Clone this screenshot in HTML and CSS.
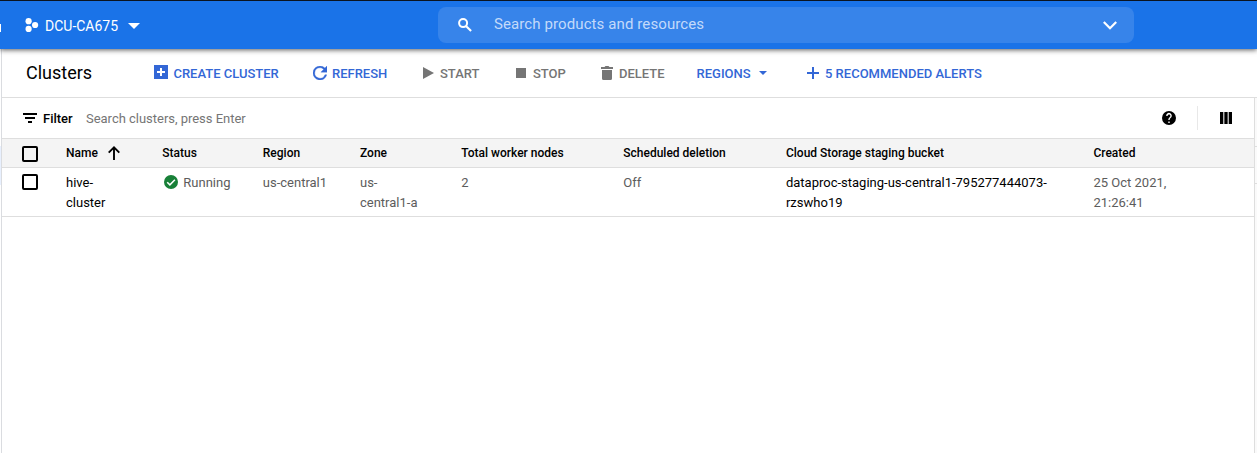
FILE: index.html
```html
<!DOCTYPE html>
<html lang="en">
<head>
<meta charset="utf-8">
<title>Clusters</title>
<link rel="stylesheet" href="styles.css">
</head>
<body>
<header class="topbar">
  <span class="brand-edge"></span>
  <div class="project">
    <svg class="project-icon" width="14" height="14" viewBox="0 0 14 14"><g fill="#fff"><circle cx="3.6" cy="3.2" r="3.1"/><circle cx="3.6" cy="10.900" r="3.1"/><circle cx="10.1" cy="7" r="3.1"/></g></svg>
    <span class="project-name">DCU-CA675</span>
    <svg width="12" height="6" viewBox="0 0 12 6"><path fill="#fff" d="M0 0h12L6 6z"/></svg>
  </div>
  <div class="search">
    <svg class="search-icon" width="14" height="14" viewBox="0 0 14 14" fill="none" stroke="#fff"><circle cx="5.1" cy="5.1" r="4" stroke-width="2"/><path d="M8.2 8.2l4.9 4.9" stroke-width="2.1"/></svg>
    <span class="search-text">Search products and resources</span>
    <svg class="search-chevron" width="14" height="9" viewBox="0 0 14 9" fill="none" stroke="#fff" stroke-width="2.2"><path d="M.8 1L7 7.2 13.2 1"/></svg>
  </div>
</header>
<div class="page">
  <aside class="edge-left"><span class="edge-active"></span></aside>
  <main class="main">
    <div class="toolbar">
      <h1 class="title">Clusters</h1>
      <div class="action create">
        <svg width="14" height="14" viewBox="0 0 14 14"><path fill="#3367d6" d="M0 0h14v14H0z"/><path fill="#fff" d="M6 3h2v3h3v2H8v3H6V8H3V6h3z"/></svg><span>CREATE CLUSTER</span>
      </div>
      <div class="action refresh">
        <svg width="14" height="14" viewBox="4 4 16 16"><path fill="#3367d6" stroke="#3367d6" stroke-width=".4" d="M17.65 6.35A7.95 7.95 0 0 0 12 4a8 8 0 1 0 7.73 10h-2.08A6 6 0 1 1 12 6c1.66 0 3.14.69 4.22 1.78L13 11h7V4z"/></svg><span>REFRESH</span>
      </div>
      <div class="action off start">
        <svg width="11" height="12" viewBox="0 0 11 12"><path fill="#757575" d="M0 0l11 6-11 6z"/></svg><span>START</span>
      </div>
      <div class="action off stop">
        <svg width="10" height="10" viewBox="0 0 10 10"><path fill="#757575" d="M0 0h10v10H0z"/></svg><span>STOP</span>
      </div>
      <div class="action off delete">
        <svg width="12" height="14" viewBox="0 0 12 14"><path fill="#757575" d="M0 1h3.500L4.500 0h3l1 1H12v2H0zM1 4h10v8.500a1.500 1.500 0 0 1-1.500 1.500h-7A1.500 1.500 0 0 1 1 12.500z"/></svg><span>DELETE</span>
      </div>
      <div class="action regions">
        <span>REGIONS</span><svg width="8" height="4" viewBox="0 0 8 4"><path fill="#3367d6" d="M0 0h8L4 4z"/></svg>
      </div>
      <div class="action alerts">
        <svg width="12" height="12" viewBox="0 0 12 12"><path fill="#3367d6" d="M5 0h2v5h5v2H7v5H5V7H0V5h5z"/></svg><span>5 RECOMMENDED ALERTS</span>
      </div>
    </div>
    <section class="panel">
      <div class="filter">
        <svg width="14" height="10" viewBox="0 0 14 10"><path fill="#000" d="M0 0h14v2H0zM2 4h10v2H2zM5 8h4v2H5z"/></svg>
        <span class="filter-label">Filter</span>
        <span class="filter-hint">Search clusters, press Enter</span>
        <svg class="help" width="14" height="14" viewBox="2 2 20 20"><path d="M12 2a10 10 0 1 0 0 20 10 10 0 0 0 0-20zm1 17h-2v-2h2zm2.070-7.750l-.9.920C13.450 12.900 13 13.500 13 15h-2v-.5c0-1.100.450-2.100 1.170-2.830l1.240-1.260A2 2 0 1 0 10 9H8a4 4 0 1 1 7.070 2.250z"/></svg>
        <span class="rule"></span>
        <svg class="columns" width="12" height="12" viewBox="0 0 12 12"><path d="M0 0h3.300v12H0zM4.350 0h3.300v12h-3.300zM8.700 0H12v12H8.700z"/></svg>
      </div>
      <div class="row head">
        <span class="box"></span>
        <div class="name-head">Name <svg width="12" height="14" viewBox="0 0 12 14" fill="none" stroke="#000" stroke-width="1.900"><path d="M6 14V1.500M.7 6.700L6 1.400l5.300 5.300"/></svg></div>
        <div>Status</div>
        <div>Region</div>
        <div>Zone</div>
        <div>Total worker nodes</div>
        <div>Scheduled deletion</div>
        <div>Cloud Storage staging bucket</div>
        <div>Created</div>
      </div>
      <div class="row body">
        <span class="box"></span>
        <div class="link">hive-<br>cluster</div>
        <div class="status"><svg width="14" height="14" viewBox="0 0 14 14"><circle cx="7" cy="7" r="7" fill="#188038"/><path d="M3.200 7.200l2.700 2.700 5-5.100" fill="none" stroke="#fff" stroke-width="1.500"/></svg>Running</div>
        <div>us-central1</div>
        <div>us-<br>central1-a</div>
        <div>2</div>
        <div>Off</div>
        <div class="link">dataproc-staging-us-central1-795277444073-<br>rzswho19</div>
        <div>25 Oct 2021,<br>21:26:41</div>
      </div>
    </section>
  </main>
  <aside class="edge-right"><span class="edge-item"></span></aside>
</div>
</body>
</html>
```
FILE: styles.css
```css
* { box-sizing: border-box; }
body {
  margin: 0;
  height: 453px;
  overflow: hidden;
  background: #fff;
  color: #000;
  font-family: Roboto, sans-serif;
  font-size: 13px;
}
svg { display: block; flex: none; }

.topbar {
  position: relative;
  display: flex;
  height: 49px;
  border-top: 1px solid #0b1420;
  background: #1a73e8;
  box-shadow: 0 1px 5px rgba(0, 0, 0, .65);
  white-space: nowrap;
}
.brand-edge {
  width: 1px;
  height: 8px;
  margin: 23px 24px 0 0;
  background: #fff;
}
.project {
  display: flex;
  align-items: center;
  width: 413px;
  padding-top: 2px;
  color: #fff;
}
.project-icon { margin-top: -2px; }
.project-name { width: 83px; margin: 0 0 0 6px; font-size: 14px; }
.search {
  display: flex;
  align-items: center;
  width: 696px;
  height: 36px;
  margin-top: 6px;
  padding: 0 17px 0 20px;
  border-radius: 8px;
  background: #3784ea;
}
.search-text {
  flex: 1;
  margin: -2px 0 0 22px;
  color: #c3dafa;
  font-size: 15px;
  letter-spacing: .1px;
}

.page { display: flex; height: 404px; }
.edge-left { width: 1px; padding-top: 97px; }
.edge-active { display: block; height: 39px; background: #e8f0fe; }
.main { width: 1256px; border-left: 1px solid #dadce0; }
.toolbar {
  display: grid;
  grid-template-columns: 128px 159px 110px 93px 85px 95.5px 110.5px 300px;
  align-items: center;
  height: 49px;
  margin-right: -1px;
  padding-left: 24px;
  border-bottom: 1px solid #dedede;
  white-space: nowrap;
}
.title { margin: -2px 0 0; font-size: 18px; font-weight: 400; }
.action {
  display: flex;
  align-items: center;
  gap: 6px;
  color: #3367d6;
  font-weight: 500;
}
.create { gap: 5.4px; }
.create svg { margin-top: -2px; }
.off { color: #757575; }
.refresh { gap: 5px; }
.stop { gap: 7px; }
.regions { gap: 8px; }

.panel { width: 1253px; height: 356px; border-right: 1px solid #dedede; }
.filter {
  display: flex;
  align-items: center;
  height: 41px;
  padding-left: 21px;
  border-bottom: 1px solid #dedede;
}
.filter-label { width: 43px; margin-left: 6px; font-weight: 500; }
.filter-hint { flex: 1; color: #757575; letter-spacing: -.02px; }
.rule { width: 1px; height: 24px; margin: 0 22px 0 21px; background: #e8e8e8; }
.columns { margin-right: 22px; }

.row {
  display: grid;
  grid-template-columns: 44px 96.3px 100.5px 97.200px 101.300px 162px 162.700px 307.500px 1fr;
  padding-left: 20px;
  border-bottom: 1px solid #dedede;
  white-space: nowrap;
}
.head {
  align-items: center;
  height: 29px;
  background: #f4f4f4;
  font-size: 12px;
  font-weight: 500;
}
.head .box { margin-top: 2px; }
.name-head { display: flex; align-items: center; gap: 10px; }
.box {
  width: 16px;
  height: 16px;
  border: 2px solid #000;
  border-radius: 2px;
}
.body { height: 49px; padding-top: 5px; color: #5c5c5c; line-height: 20px; }
.body .box { margin-top: 1px; }
.link { color: #000; }
.status { display: flex; height: 20px; align-items: center; gap: 5.3px; padding-left: 1.7px; }
.status svg { margin-top: -2px; }

.edge-right {
  flex: none;
  width: 2px;
  height: 355px;
  margin: 49px 0 0 -2px;
  padding-top: 48px;
  background: #fafafa;
}
.edge-item { display: block; height: 38px; border: solid #dedede; border-width: 1px 0; }
```
